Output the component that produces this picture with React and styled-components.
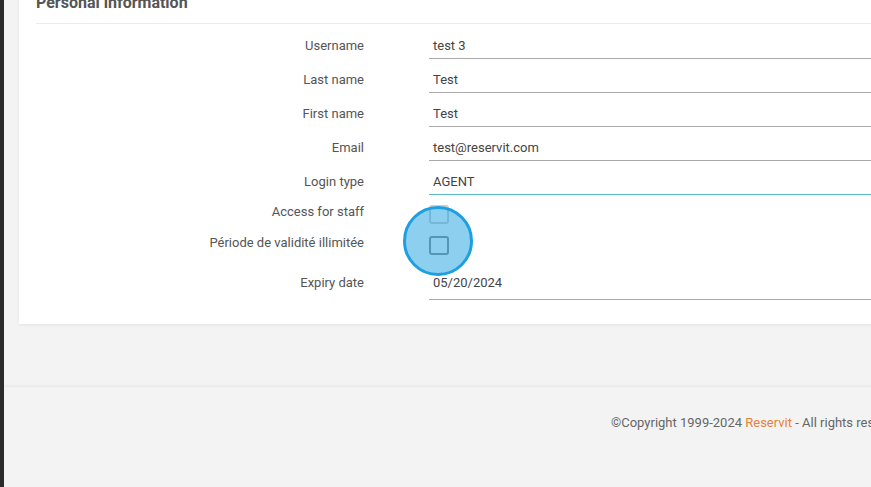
import React from "react";
import styled, { createGlobalStyle } from "styled-components";

const GlobalStyle = createGlobalStyle`
    html, body {
        margin: 0;
        padding: 0;
        height: 100%;
        overflow: hidden;
        background: #f3f3f3;
        font-family: Roboto, "Liberation Sans", Arial, sans-serif;
    }
    #root {
        height: 100%;
    }
`;

const Layout = styled.div`
    display: flex;
    flex-flow: row nowrap;
    height: 100%;
`;

const SideStrip = styled.div`
    flex: 0 0 4px;
    background: #2b2b2b;
`;

const Main = styled.div`
    flex: 0 0 1300px;
    display: flex;
    flex-direction: column;
`;

const Content = styled.div`
    box-sizing: border-box;
    height: 386px;
    padding-left: 15px;
`;

const Card = styled.section`
    box-sizing: border-box;
    margin-top: -7px;
    background: white;
    padding: 0 17px 24px;
    box-shadow: 0 1px 3px rgba(0, 0, 0, 0.07);
`;

const Title = styled.h3`
    margin: 0;
    font-size: 16px;
    line-height: 20px;
    font-weight: 700;
    color: #555;
    padding-bottom: 10px;
    border-bottom: 1px solid #ececec;
`;

const Form = styled.form`
    margin-top: 1px;
    display: flex;
    flex-direction: column;
`;

const Row = styled.div`
    display: flex;
    flex-flow: row nowrap;
    align-items: flex-start;
    height: ${p => p.$height || 34}px;
`;

const Label = styled.label`
    flex: 0 0 328px;
    text-align: right;
    font-size: 13px;
    line-height: 16px;
    color: #555;
    padding-top: ${p => p.$top}px;
`;

const Field = styled.div`
    box-sizing: border-box;
    margin-left: 65px;
    flex: 1;
    height: ${p => p.$height || 34}px;
    padding: ${p => p.$top || 13}px 4px 0;
    font-size: 13px;
    line-height: 16px;
    color: #444;
    border-bottom: 1px solid ${p => (p.$focused ? "#5ab9c6" : "#a9a9a9")};
`;

const CheckBox = styled.span`
    box-sizing: border-box;
    display: block;
    margin-left: 65px;
    margin-top: 10px;
    width: 20px;
    height: 19px;
    border-radius: 3px;
    border: 2px solid ${p => (p.$hover ? "#8c8c8c" : "#cfcfcf")};
    background: white;
`;

const CheckHolder = styled.div`
    position: relative;
`;

const Pointer = styled.span`
    position: absolute;
    left: 39px;
    top: -20px;
    width: 64px;
    height: 64px;
    border-radius: 50%;
    border: 3px solid #1ea0e0;
    background: rgba(26, 159, 224, 0.5);
    pointer-events: none;
`;

const Footer = styled.footer`
    flex: 1;
    border-top: 1px solid #ebebeb;
    box-shadow: 0 -1px 2px rgba(0, 0, 0, 0.03);
    padding: 28px 0 0 607px;
    font-size: 13px;
    line-height: 16px;
    color: #666;
    white-space: nowrap;
`;

const Brand = styled.span`
    color: #e8823a;
`;

const fields = [
    { label: "Username", value: "test 3" },
    { label: "Last name", value: "Test" },
    { label: "First name", value: "Test" },
    { label: "Email", value: "test@reservit.com" },
    { label: "Login type", value: "AGENT", focused: true }
];

const App = () => (
    <>
        <GlobalStyle />
        <Layout>
            <SideStrip />
            <Main>
                <Content>
                    <Card>
                        <Title>Personal information</Title>
                        <Form>
                            {fields.map(f => (
                                <Row key={f.label}>
                                    <Label $top={13}>{f.label}</Label>
                                    <Field $focused={f.focused}>{f.value}</Field>
                                </Row>
                            ))}
                            <Row $height={31}>
                                <Label $top={9}>Access for staff</Label>
                                <CheckBox />
                            </Row>
                            <Row $height={31}>
                                <Label $top={9}>Période de validité illimitée</Label>
                                <CheckHolder>
                                    <CheckBox $hover />
                                    <Pointer />
                                </CheckHolder>
                            </Row>
                            <Row $height={43}>
                                <Label $top={18}>Expiry date</Label>
                                <Field $height={43} $top={18}>05/20/2024</Field>
                            </Row>
                        </Form>
                    </Card>
                </Content>
                <Footer>
                    ©Copyright 1999-2024 <Brand>Reservit</Brand> - All rights reserved
                </Footer>
            </Main>
        </Layout>
    </>
);

export default App;
